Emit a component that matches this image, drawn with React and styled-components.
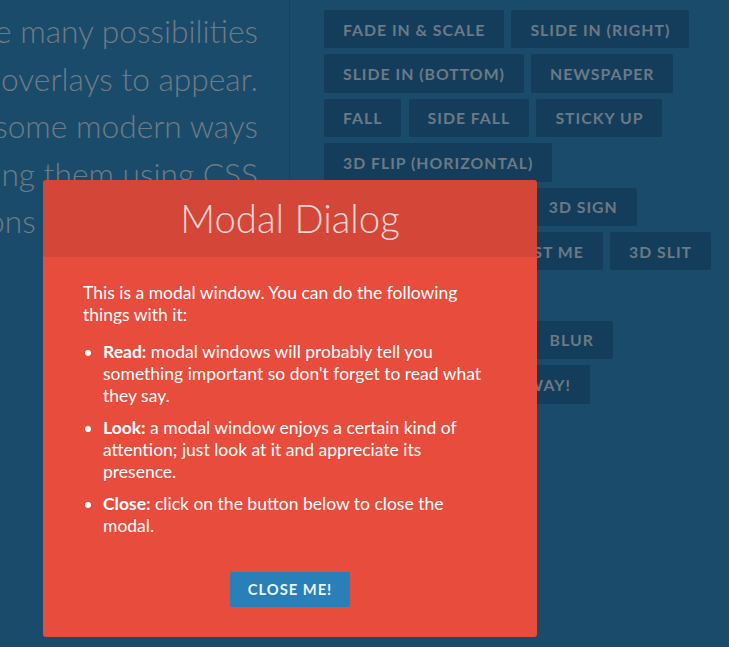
import React from "react";
import styled, { createGlobalStyle } from "styled-components";

const GlobalStyle = createGlobalStyle`
  html, body {
    margin: 0;
    padding: 0;
    overflow: hidden;
    background: #1b4b6b;
    font-family: Lato, "Open Sans", sans-serif;
  }
  * { box-sizing: border-box; }
`;

const Page = styled.div`
  position: relative;
  display: flex;
  align-items: flex-start;
  width: 729px;
  height: 647px;
  overflow: hidden;
`;

const IntroColumn = styled.div`
  flex: none;
  width: 290px;
  padding: 8px 32px 0 0;
  overflow: hidden;
`;

const IntroLine = styled.div`
  display: flex;
  justify-content: flex-end;
  white-space: nowrap;
  font-size: 31.7px;
  line-height: 47.5px;
  font-weight: 300;
  color: #6e7c86;
`;

const ButtonColumn = styled.div`
  flex: 1;
  min-height: 300px;
  padding: 7px 0 0 32px;
  box-shadow: -1px 0 0 rgba(0, 0, 0, 0.12);
`;

const ButtonList = styled.div`
  display: flex;
  flex-wrap: wrap;
  column-gap: 3.2px;
`;

const EffectButton = styled.button`
  border: none;
  margin: 3px 2px;
  padding: 9.6px 19px;
  border-radius: 2px;
  background: #143d5b;
  color: #6b7a85;
  font-family: Lato, sans-serif;
  font-size: 15.8px;
  line-height: 19.2px;
  font-weight: 700;
  letter-spacing: 1px;
  text-transform: uppercase;
  white-space: nowrap;
`;

const Modal = styled.div`
  position: absolute;
  left: 43px;
  top: 180px;
  width: 494px;
  background: #e74c3c;
  color: #fff;
  border-radius: 3px;
`;

const ModalTitle = styled.h3`
  margin: 0;
  padding: 15.4px;
  text-align: center;
  font-size: 38.4px;
  line-height: 46px;
  font-weight: 300;
  color: rgba(255, 255, 255, 0.8);
  background: rgba(0, 0, 0, 0.08);
  border-radius: 3px 3px 0 0;
`;

const ModalBody = styled.div`
  padding: 15px 40px 30px;
  font-size: 17.5px;
  line-height: 22px;
  font-weight: 400;

  strong {
    font-weight: 700;
  }
`;

const Para = styled.p`
  margin: 0;
  padding: 10px 0;
`;

const List = styled.ul`
  margin: 0;
  padding: 0 0 30px 20px;
`;

const Item = styled.li`
  padding: 5px 0;
`;

const CloseButton = styled.button`
  display: block;
  margin: 0 auto;
  border: none;
  padding: 8.8px 17.7px;
  border-radius: 2px;
  background: #2980b9;
  color: #eef4f8;
  font-family: Lato, sans-serif;
  font-size: 14.72px;
  line-height: 17.7px;
  font-weight: 700;
  letter-spacing: 1px;
  text-transform: uppercase;
`;

const intro = [
  "There are many possibilities",
  "for modal overlays to appear.",
  "Here are some modern ways",
  "of showing them using CSS",
  "transitions and animations.",
];

const effects = [
  "Fade in & Scale",
  "Slide in (right)",
  "Slide in (bottom)",
  "Newspaper",
  "Fall",
  "Side Fall",
  "Sticky Up",
  "3D Flip (horizontal)",
  "3D Flip (vertical)",
  "3D Sign",
  "Super Scaled",
  "Just Me",
  "3D Slit",
  "3D Rotate Bottom",
  "3D Rotate In Left",
  "Blur",
  "Let me in",
  "Make way!",
  "Slip from top",
];

export default function App() {
  return (
    <>
      <GlobalStyle />
      <Page>
        <IntroColumn>
          {intro.map((l) => (
            <IntroLine key={l}>{l}</IntroLine>
          ))}
        </IntroColumn>
        <ButtonColumn>
          <ButtonList>
            {effects.map((e) => (
              <EffectButton key={e}>{e}</EffectButton>
            ))}
          </ButtonList>
        </ButtonColumn>
        <Modal>
          <ModalTitle>Modal Dialog</ModalTitle>
          <ModalBody>
            <Para>This is a modal window. You can do the following things with it:</Para>
            <List>
              <Item>
                <strong>Read:</strong> modal windows will probably tell you something important so don't forget to read what they say.
              </Item>
              <Item>
                <strong>Look:</strong> a modal window enjoys a certain kind of attention; just look at it and appreciate its presence.
              </Item>
              <Item>
                <strong>Close:</strong> click on the button below to close the modal.
              </Item>
            </List>
            <CloseButton>Close me!</CloseButton>
          </ModalBody>
        </Modal>
      </Page>
    </>
  );
}
